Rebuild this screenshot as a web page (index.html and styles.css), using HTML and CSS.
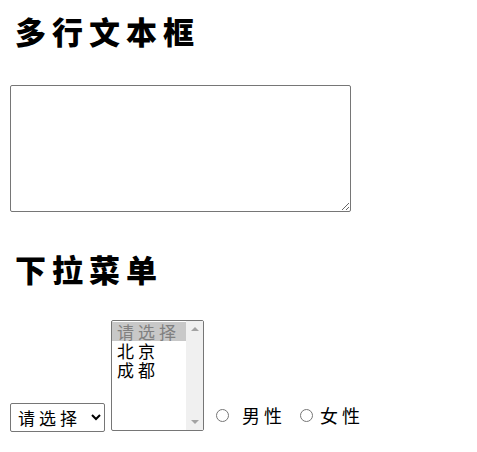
FILE: index.html
```html
<!DOCTYPE html>
<html lang="zh">
<head>
<meta charset="utf-8">
<title>表单</title>
<link rel="stylesheet" href="styles.css">
</head>
<body>
<div class="page">
  <h1 class="title">多行文本框</h1>
  <textarea class="area"></textarea>
  <h1 class="title title-2">下拉菜单</h1>
  <div class="row">
    <select class="drop">
      <option>请选择</option>
      <option>北京</option>
      <option>成都</option>
    </select>
    <div class="list" role="listbox">
      <div class="list-items">
        <div class="opt opt-selected" role="option" aria-selected="true" aria-disabled="true">请选择</div>
        <div class="opt" role="option">北京</div>
        <div class="opt" role="option">成都</div>
      </div>
      <div class="scroll">
        <span class="arrow arrow-up"></span>
        <span class="arrow arrow-down"></span>
      </div>
    </div>
    <label class="choice"><input type="radio" name="sex" class="radio"><span>男性</span></label>
    <label class="choice choice-2"><input type="radio" name="sex" class="radio"><span>女性</span></label>
  </div>
</div>
</body>
</html>
```

FILE: styles.css
```css
html, body {
  margin: 0;
  padding: 0;
  background: #fff;
}
body {
  font-family: "Noto Sans CJK SC", sans-serif;
  color: #000;
}
.page {
  padding: 13px 10px 0;
}
.title {
  margin: 0 0 36px;
  padding-left: 5px;
  font-size: 31px;
  line-height: 36px;
  font-weight: 900;
  letter-spacing: 6px;
}
.title-2 {
  margin-top: 39px;
  margin-bottom: 33px;
}
.area {
  display: block;
  box-sizing: border-box;
  width: 341px;
  height: 127px;
  margin: 0;
  border: 1px solid #767676;
  border-radius: 2px;
  resize: both;
}
.row {
  display: flex;
  align-items: flex-end;
}
.drop {
  box-sizing: border-box;
  width: 95px;
  height: 29px;
  margin: 0 6px 0 0;
  padding: 0 0 0 3px;
  font-family: "Noto Sans CJK SC", sans-serif;
  font-size: 17px;
  letter-spacing: 4px;
  color: #000;
  border: 1px solid #767676;
  border-radius: 2px;
  background: #fff;
}
.list {
  box-sizing: border-box;
  display: flex;
  width: 93px;
  height: 111px;
  margin: 0 0 1px 0;
  border: 1px solid #767676;
  border-radius: 2px;
  background: #fff;
  font-size: 17px;
  letter-spacing: 4px;
}
.list-items {
  flex: 1;
  padding-top: 1px;
}
.opt {
  height: 19px;
  line-height: 19px;
  padding-left: 5px;
  white-space: nowrap;
}
.opt-selected {
  background: #c8c8c8;
  color: #808080;
}
.scroll {
  width: 17px;
  background: #f0f0f0;
  display: flex;
  flex-direction: column;
  justify-content: space-between;
  align-items: center;
  padding: 6px 0;
}
.arrow {
  width: 0;
  height: 0;
  border-left: 4px solid transparent;
  border-right: 4px solid transparent;
}
.arrow-up {
  border-bottom: 4px solid #a3a3a3;
}
.arrow-down {
  border-top: 4px solid #a3a3a3;
}
.choice {
  display: inline-flex;
  align-items: center;
  height: 22px;
  margin-bottom: 6px;
  font-size: 18px;
  line-height: 22px;
  letter-spacing: 4px;
}
.radio {
  width: 13px;
  height: 13px;
  margin: 0 13px 0 12px;
}
.choice-2 .radio {
  margin-left: 14px;
  margin-right: 7px;
}
```
